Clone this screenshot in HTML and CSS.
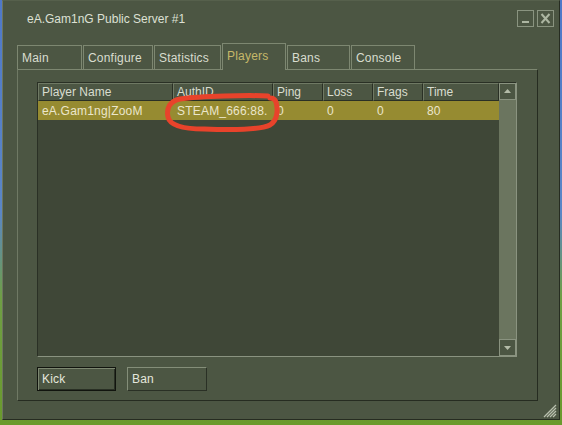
FILE: index.html
```html
<!DOCTYPE html>
<html>
<head>
<meta charset="utf-8">
<link rel="stylesheet" href="styles.css">
</head>
<body>
<div class="window">
  <div class="titlebar">
    <span class="title">eA.Gam1nG Public Server #1</span>
    <div class="wbtns">
      <span class="wbtn"><svg width="15" height="15" viewBox="0 0 15 15"><rect x="4" y="10" width="7" height="2" fill="#adb6a2"/></svg></span>
      <span class="wbtn"><svg width="15" height="15" viewBox="0 0 15 15"><path d="M3.5 3 L11.5 12 M11.5 3 L3.5 12" stroke="#adb6a2" stroke-width="2"/></svg></span>
    </div>
  </div>
  <div class="tabs">
    <div class="tab t-main">Main</div>
    <div class="tab t-conf">Configure</div>
    <div class="tab t-stat">Statistics</div>
    <div class="tab t-play active">Players</div>
    <div class="tab t-bans">Bans</div>
    <div class="tab t-cons">Console</div>
  </div>
  <div class="panel">
    <div class="list">
      <div class="table">
        <div class="grid hdr">
          <div class="hc">Player Name</div>
          <div class="hc">AuthID</div>
          <div class="hc">Ping</div>
          <div class="hc">Loss</div>
          <div class="hc">Frags</div>
          <div class="hc">Time</div>
        </div>
        <div class="grid row sel">
          <div class="cell">eA.Gam1ng|ZooM</div>
          <div class="cell">STEAM_666:88.</div>
          <div class="cell">0</div>
          <div class="cell">0</div>
          <div class="cell">0</div>
          <div class="cell">80</div>
        </div>
      </div>
      <div class="scroll">
        <div class="sbtn"><svg width="15" height="15" viewBox="0 0 15 15"><path d="M4 9 L11 9 L7.5 5 Z" fill="#b4bca8"/></svg></div>
        <div class="track"></div>
        <div class="sbtn"><svg width="15" height="15" viewBox="0 0 15 15"><path d="M4 6 L11 6 L7.5 10 Z" fill="#b4bca8"/></svg></div>
      </div>
    </div>
    <div class="btns">
      <div class="btn kick">Kick</div>
      <div class="btn ban">Ban</div>
    </div>
  </div>
  <svg class="grip" width="14" height="14" viewBox="0 0 14 14">
    <path d="M13 1 L1 13 M13 4 L4 13 M13 7 L7 13 M13 10 L10 13" stroke="#b9c0ae" stroke-width="1.3"/>
  </svg>
  <svg class="mark" width="130" height="48" viewBox="0 0 130 48">
    <path d="M108 6 C90 5 40 6 20 9 C10 11 6 18 8 27 C10 36 24 39 44 39 C70 40 100 40 110 35 C118 30 118 19 116 12 C115 9 113 8 110 8" fill="none" stroke="#e8432b" stroke-width="5" stroke-linecap="round"/>
  </svg>
</div>
</body>
</html>
```

FILE: styles.css
```css
html, body {
  margin: 0;
  padding: 0;
}
body {
  width: 562px;
  height: 425px;
  overflow: hidden;
  background: linear-gradient(to bottom, #4f78c8 0%, #5b86c6 50%, #6f9f45 70%, #6a9a2c 100%);
  font-family: "Liberation Sans", Arial, sans-serif;
  font-size: 12px;
  color: #d9ddcf;
}
.window {
  position: relative;
  margin-left: 2px;
  width: 558px;
  height: 420px;
  box-sizing: border-box;
  background: #4c5643;
  border-top: 1px solid #56604c;
  border-left: 1px solid #6d775f;
  border-right: 1px solid #262c21;
  border-bottom: 1px solid #262c21;
}
.titlebar {
  height: 42px;
  display: flex;
  justify-content: space-between;
  align-items: flex-start;
}
.title {
  padding-left: 24px;
  padding-top: 11px;
  line-height: 15px;
  color: #dde0d4;
}
.wbtns {
  display: flex;
  gap: 3px;
  margin-top: 9px;
  margin-right: 5px;
}
.wbtn {
  width: 15px;
  height: 15px;
  border: 1px solid #8a9480;
  display: block;
}
.wbtn svg { display: block; }
.tabs {
  display: flex;
  align-items: flex-end;
  gap: 1px;
  height: 26px;
  margin-left: 14px;
}
.tab {
  box-sizing: border-box;
  height: 24px;
  border: 1px solid #7d8771;
  border-bottom: none;
  padding-left: 4px;
  line-height: 24px;
  letter-spacing: 0.2px;
  color: #d9ddcf;
}
.tab.active {
  height: 27px;
  margin-bottom: -1px;
  position: relative;
  z-index: 1;
  background: #4c5643;
  color: #c6b869;
  line-height: 25px;
}
.t-main { width: 65px; }
.t-conf { width: 70px; }
.t-stat { width: 67px; }
.t-play { width: 64px; }
.t-bans { width: 63px; }
.t-cons { width: 64px; }
.panel {
  box-sizing: border-box;
  width: 521px;
  height: 332px;
  margin-left: 14px;
  border-top: 1px solid #7d8771;
  border-left: 1px solid #6f7964;
  border-right: 1px solid #262c21;
  border-bottom: 1px solid #262c21;
  padding: 12px 0 0 19px;
}
.list {
  box-sizing: border-box;
  width: 480px;
  height: 275px;
  display: flex;
  background: #3f4737;
  border-top: 1px solid #2a3025;
  border-left: 1px solid #2a3025;
  border-right: 1px solid #8a9380;
  border-bottom: 1px solid #8a9380;
}
.table {
  flex: 1;
}
.grid {
  display: grid;
  grid-template-columns: 135px 100px 50px 50px 50px 76px;
}
.hdr {
  height: 18px;
}
.hc {
  box-sizing: border-box;
  background: #4c5643;
  border-top: 1px solid #6f7964;
  border-left: 1px solid #6f7964;
  border-right: 1px solid #2a3025;
  border-bottom: 1px solid #2a3025;
  padding-left: 3px;
  line-height: 16px;
  color: #d9ddcf;
  white-space: nowrap;
  overflow: hidden;
}
.row {
  height: 19px;
}
.row.sel {
  background: #968b31;
}
.cell {
  padding-left: 4px;
  line-height: 20px;
  color: #ebe6cc;
  white-space: nowrap;
  overflow: hidden;
  letter-spacing: 0.2px;
}
.scroll {
  width: 17px;
  display: flex;
  flex-direction: column;
  background: #6b755f;
}
.sbtn {
  box-sizing: border-box;
  width: 17px;
  height: 17px;
  background: #4c5643;
  border: 1px solid #8a9380;
}
.sbtn svg { display: block; }
.track {
  flex: 1;
}
.btns {
  display: flex;
  gap: 11px;
  margin-top: 10px;
}
.btn {
  box-sizing: border-box;
  height: 24px;
  padding-left: 4px;
  line-height: 22px;
  color: #e4e7dc;
  background: #4c5643;
  letter-spacing: 0.2px;
}
.kick {
  width: 79px;
  border: 1px solid #11140e;
  box-shadow: inset 1px 1px 0 #7d8771, inset -1px -1px 0 #2a3025;
}
.ban {
  width: 80px;
  border-top: 1px solid #848e79;
  border-left: 1px solid #848e79;
  border-right: 1px solid #2a3025;
  border-bottom: 1px solid #2a3025;
}
.grip {
  position: absolute;
  right: 2px;
  bottom: 1px;
}
.mark {
  position: absolute;
  left: 157px;
  top: 89px;
}
```
